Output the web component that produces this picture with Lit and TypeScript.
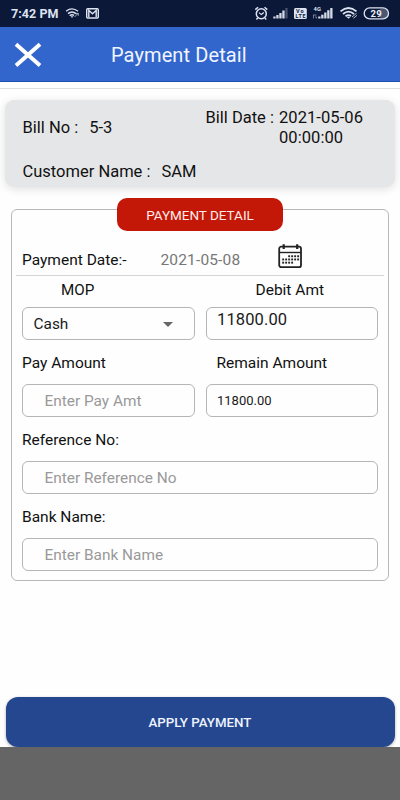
import { LitElement, html, css, svg } from "lit";
import { customElement, property } from "lit/decorators.js";

@customElement("status-bar")
class StatusBar extends LitElement {
  static styles = css`
    :host { display: flex; align-items: center; height: 27px; box-sizing: border-box; background: #0c1838; color: #dde3f0; padding-left: 11px; font: 700 12.5px/28px Roboto, sans-serif; }
    .time { width: 55px; white-space: nowrap; letter-spacing: .05px; }
    svg { display: block; flex: none; }
    .right { margin-left: auto; }
    text { font-family: Roboto, sans-serif; font-weight: 700; }
  `;
  private bars(x: number, heights: number[], dim: number[]) {
    return heights.map((h, i) => svg`<rect x=${x + i * 3} y=${18.5 - h} width="2.3" height=${h} fill="#d4dae8" opacity=${dim.includes(i) ? 0.3 : 1} />`);
  }
  render() {
    return html`
      <span class="time">7:42 PM</span>
      <svg width="40" height="27" viewBox="66 0 40 27" fill="none" stroke="#dde3f0">
        <path d="M66 11.3Q72 6.500 78 11.300M68 13.600Q72 10.200 76 13.600M69.700 15.700Q72 13.900 74 15.400" stroke-width="1.4" />
        <path d="M70.800 16.300h2.500L72 18z" fill="#dde3f0" stroke="none" />
        <path d="M74.500 17l3.700-3.700M76 13.500h2.300v2.300" stroke-width="1" opacity=".7" />
        <rect x="86.700" y="8.800" width="11.600" height="9.200" rx="1" stroke-width="1.400" />
        <path d="M88.800 17V10.300l3.700 3.400 3.700-3.400v6.700" stroke-width="1.400" />
      </svg>
      <svg class="right" width="146" height="27" viewBox="254 0 146 27">
        <g fill="none" stroke="#dde3f0" stroke-width="1.500">
          <circle cx="261.300" cy="13.700" r="5" />
          <path d="M255.300 9.600l2.800-2.400M267.300 9.600l-2.800-2.400M257.700 18l-1.300 1.500M264.900 18l1.300 1.500" />
          <path d="M259 12.600l2.300 2 2.600-2" stroke-width="1.200" />
        </g>
        ${this.bars(273.3, [2, 3.5, 5.5, 8, 10.5], [4])}
        <rect x="294" y="8" width="12.800" height="11" rx="1.500" fill="#dde3f0" />
        <text x="296" y="13.200" font-size="5.500" textLength="7.500" fill="#0c1838">Vo</text>
        <text x="295.400" y="18.200" font-size="5.300" textLength="10" fill="#0c1838">LTE</text>
        <text x="313.600" y="10.500" font-size="5.800" fill="#dde3f0">4G</text>
        <path d="M313 15h3.500M313.500 15v3.500M315 17h1.500v1.500" stroke="#8e98ae" stroke-width=".8" fill="none" />
        ${this.bars(318.2, [2, 3.8, 6, 8.3, 10.5], [])}
        <g fill="none" stroke="#dde3f0" stroke-width="1.800">
          <path d="M340.500 11.400Q348.500 4.500 356.500 11.400M343 14Q348.500 9.300 354 14M345.500 16.300Q348.500 14 351 16" />
          <path d="M346.500 16.800h4l-2 2z" fill="#dde3f0" stroke="none" />
          <path d="M352 17l4.500-3.700M353.500 18.300l3.500-3" stroke-width="1" opacity=".8" />
        </g>
        <rect x="379" y="8.500" width="9" height="9.800" rx="4" fill="#4c5670" />
        <rect x="364.200" y="7.900" width="24.300" height="11" rx="5.500" fill="none" stroke="#dde3f0" stroke-width="1.300" />
        <text x="370.600" y="16.700" font-size="9.500" textLength="11" fill="#eef1f8">29</text>
      </svg>`;
  }
}

@customElement("form-field")
class FormField extends LitElement {
  @property() value = "";
  @property() placeholder = "";
  @property({ type: Boolean }) select = false;
  static styles = css`
    :host { display: block; min-width: 0; flex: 1; }
    .box { display: flex; align-items: center; height: 33.500px; box-sizing: border-box; border: 1px solid #b5b5b5; border-radius: 6px; padding: 1px 0 0 10.500px; font: 15.400px/20px Roboto, sans-serif; color: #1a1a1a; }
    .hint { color: #999; padding-left: 11px; }
    .arrow { margin-left: auto; margin-right: 20.500px; border: 5.500px solid transparent; border-top-color: #666; border-bottom: 0; }
    :host([top]) .box { align-items: flex-start; font-size: 16.500px; letter-spacing: .12px; padding-top: 2px; }
    :host([small]) .box { font-size: 13px; letter-spacing: 0; padding-top: 0; }
  `;
  render() {
    return html`<div class="box">
      ${this.value ? html`<span>${this.value}</span>` : html`<span class="hint">${this.placeholder}</span>`}
      ${this.select ? html`<i class="arrow"></i>` : ""}
    </div>`;
  }
}

@customElement("app-root")
class AppRoot extends LitElement {
  static styles = css`
    :host { display: flex; flex-direction: column; height: 800px; background: #fefefe; font: 15px/20px Roboto, sans-serif; color: #111; white-space: nowrap; overflow: hidden; }
    .header { display: flex; align-items: center; height: 55px; flex: none; box-sizing: border-box; background: #3366cc; border-bottom: 1px solid #1d50ae; padding: 2px 0 0 14px; color: #f1f5ff; }
    .header svg { width: 28px; height: 26px; }
    .title { margin-left: 69px; font-size: 20px; line-height: 26px; letter-spacing: .1px; }
    .strip { height: 7px; flex: none; box-sizing: border-box; border-bottom: 1px solid #dedede; }
    .bill { display: flex; flex-direction: column; justify-content: space-between; height: 87px; flex: none; box-sizing: border-box; margin: 11px 5px 0; padding: 8px 17px 5px 17.500px; border-radius: 9px; background: #e5e6e8; box-shadow: 0 2px 9px rgba(0, 20, 10, .13); font-size: 16.500px; }
    .line { display: flex; }
    .number { width: 183px; padding-top: 10px; }
    .gap { margin-left: 11px; }
    .stamp { margin-left: 5px; line-height: 19.500px; letter-spacing: .08px; }
    .panel { position: relative; flex: none; box-sizing: border-box; height: 372px; margin: 22.400px 11px 0; border: 1px solid #b8b8b8; border-radius: 6px; padding: 0 10px; font-size: 15.500px; }
    .badge { position: absolute; left: 105px; top: -12.500px; width: 166px; height: 33.500px; border-radius: 10px; background: #c31708; color: #ffecea; font-size: 13.500px; letter-spacing: -.02px; line-height: 34px; text-align: center; }
    .date { display: flex; align-items: center; height: 65.400px; box-sizing: border-box; padding: 34px 6px 0; margin: 0 -6px; border-bottom: 1px solid #d5d5d5; }
    .day { color: #777; width: 116px; letter-spacing: .15px; }
    .cap { width: 138.500px; }
    .date svg { width: 26px; height: 26px; margin-top: -8px; }
    .row { display: flex; gap: 11px; }
    .heads > span { flex: 1; line-height: 28px; height: 31px; }
    .mop { padding-left: 39px; font-size: 15.200px; }
    .debit { padding-left: 11px; font-size: 15.500px; }
    .amounts > span { flex: 1; height: 43.500px; line-height: 46px; }
    .right { padding-left: 11px; }
    .label { height: 43.400px; line-height: 46px; }
    .apply { height: 49.500px; flex: none; margin: auto 5.500px 0; border-radius: 12px; background: #24478f; box-shadow: 0 1px 3px rgba(0, 0, 0, .35); color: #eef3ff; font-size: 13.300px; font-weight: 500; line-height: 51px; text-align: center; }
    .nav { height: 53.500px; flex: none; background: #656565; z-index: 1; }
  `;
  render() {
    const dots = [[11, 14, 17, 20], [5, 8, 11, 14, 17, 20], [5, 8, 11, 14]];
    return html`
      <status-bar></status-bar>
      <div class="header">
        <svg viewBox="0 0 28 26" fill="none" stroke="#fff" stroke-width="3.900"><path d="M2 2.300L26 23.500M26 2.300L2 23.500" /></svg>
        <span class="title">Payment Detail</span>
      </div>
      <div class="strip"></div>
      <div class="bill">
        <div class="line">
          <span class="number">Bill No :<span class="gap">5-3</span></span>
          <span>Bill Date :</span>
          <span class="stamp">2021-05-06<br />00:00:00</span>
        </div>
        <div class="line">Customer Name :<span class="gap">SAM</span></div>
      </div>
      <div class="panel">
        <div class="badge">PAYMENT DETAIL</div>
        <div class="date">
          <span class="cap">Payment Date:-</span><span class="day">2021-05-08</span>
          <svg viewBox="0 0 26 26" fill="none" stroke="#222">
            <rect x="2.200" y="3.700" width="21.800" height="20.500" rx="2" stroke-width="1.800" />
            <path d="M3 9.500H24" stroke-width="1.400" />
            <path d="M6.700 1.300V6M20.200 1.300V6" stroke-width="2.200" />
            ${dots.map((xs, r) => xs.map((x) => svg`<rect x=${x + 0.2} y=${12.3 + r * 3.2} width="1.900" height="1.900" fill="#222" stroke="none" />`))}
          </svg>
        </div>
        <div class="row heads"><span><span class="mop">MOP</span></span><span><span class="mop"><span class="debit">Debit Amt</span></span></span></div>
        <div class="row">
          <form-field value="Cash" select></form-field>
          <form-field value="11800.00" top></form-field>
        </div>
        <div class="row amounts"><span>Pay Amount</span><span><span class="right">Remain Amount</span></span></div>
        <div class="row">
          <form-field placeholder="Enter Pay Amt"></form-field>
          <form-field value="11800.00" small></form-field>
        </div>
        <div class="label">Reference No:</div>
        <form-field placeholder="Enter Reference No"></form-field>
        <div class="label">Bank Name:</div>
        <form-field placeholder="Enter Bank Name"></form-field>
      </div>
      <div class="apply">APPLY PAYMENT</div>
      <div class="nav"></div>`;
  }
}
